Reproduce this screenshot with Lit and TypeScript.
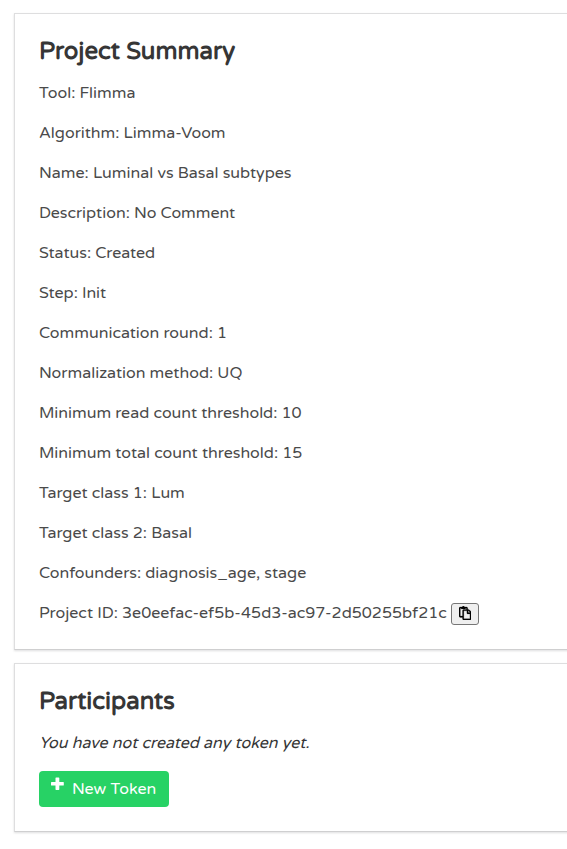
import { LitElement, html, css } from "lit";
import { customElement } from "lit/decorators.js";

const lines = [
  "Tool: Flimma",
  "Algorithm: Limma-Voom",
  "Name: Luminal vs Basal subtypes",
  "Description: No Comment",
  "Status: Created",
  "Step: Init",
  "Communication round: 1",
  "Normalization method: UQ",
  "Minimum read count threshold: 10",
  "Minimum total count threshold: 15",
  "Target class 1: Lum",
  "Target class 2: Basal",
  "Confounders: diagnosis_age, stage",
];

@customElement("app-root")
export class AppRoot extends LitElement {
  static styles = css`
    :host { display: block; height: 849px; overflow: hidden; background: #fff;
      font: 16px/24px "Varela Round", "Noto Sans", sans-serif; color: #4a4a4a; }
    * { box-sizing: border-box; }
    .page { display: flex; flex-direction: column; gap: 13px; padding: 13px 0 0 14px; width: 600px; }
    .card { border: 1px solid #dededf; border-bottom-color: #cfcfd0; padding: 24px; background: #fff;
      box-shadow: 0 1px 2px rgba(34, 36, 38, 0.15); display: flex; flex-direction: column;
      gap: 16px; align-items: flex-start; }
    h2 { margin: 0; font-size: 24px; line-height: 27px; font-weight: 700; color: #363636; }
    p { margin: 0; height: 24px; white-space: nowrap; }
    .id { display: flex; gap: 4px; }
    .empty { font-style: italic; color: #363636; }
    .copy { width: 28px; height: 22px; margin: 2px 0 0; padding: 0; border: 1px solid #767676;
      border-radius: 3px; background: #efefef; color: #000; display: flex;
      align-items: flex-start; justify-content: center; }
    .copy svg { display: block; margin-top: 2px; }
    .new { height: 36px; width: 130px; border: 0; border-radius: 4px; background: #27d265; color: #fff;
      font: inherit; display: flex; padding: 6px 0 0 12px; gap: 8px; white-space: nowrap; }
    .new svg { display: block; flex: none; }
  `;

  render() {
    return html`
      <div class="page">
        <section class="card">
          <h2>Project Summary</h2>
          ${lines.map((l) => html`<p>${l}</p>`)}
          <p class="id">
            <span>Project ID: 3e0eefac-ef5b-45d3-ac97-2d50255bf21c</span>
            <button class="copy" aria-label="Copy">
              <svg width="12.25" height="14" viewBox="0 0 448 512" fill="currentColor" fill-rule="evenodd" stroke="currentColor" stroke-width="8">
                <path d="M433.9 193.9l-51.8-51.8A48 48 0 0 0 348.1 128H320V80c0-26.5-21.5-48-48-48h-66.8C198.6 13.4 180.9 0 160 0s-38.6 13.4-45.2 32H48C21.5 32 0 53.5 0 80v288c0 26.5 21.5 48 48 48h80v48c0 26.5 21.5 48 48 48h224c26.5 0 48-21.5 48-48V227.9a48 48 0 0 0-14.1-34zM48 80h32v16c0 9 7 16 16 16h128c9 0 16-7 16-16V80h32v48h-96c-26.5 0-48 21.5-48 48v192H48zM176 176h112v88c0 13.3 10.7 24 24 24h88v176H176zM336 176h9l55 55v9h-64z" />
              </svg>
            </button>
          </p>
        </section>
        <section class="card">
          <h2>Participants</h2>
          <p class="empty">You have not created any token yet.</p>
          <button class="new">
            <svg width="13" height="14" viewBox="0 0 13 14" fill="#fff">
              <rect x="4.500" y="0.500" width="3.800" height="12.400" rx="0.600" />
              <rect x="0" y="4.900" width="12.800" height="3.700" rx="0.600" />
            </svg>
            <span>New Token</span>
          </button>
        </section>
      </div>`;
  }
}
